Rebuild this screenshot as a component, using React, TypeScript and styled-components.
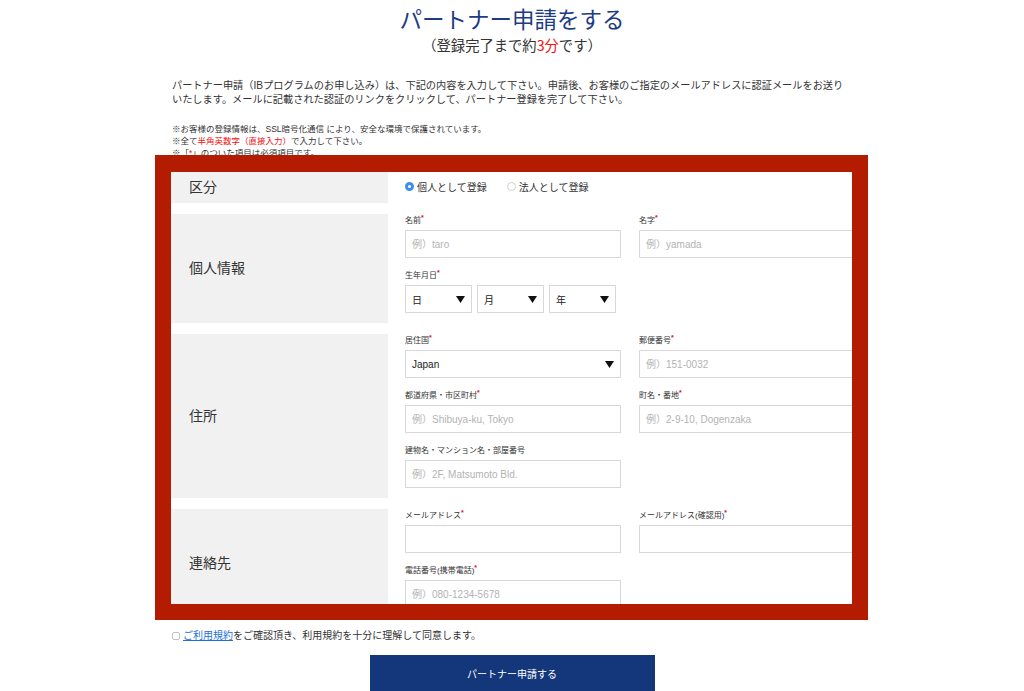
import React from 'react'
import styled, { createGlobalStyle } from 'styled-components'

const GlobalStyle = createGlobalStyle`
  html, body {
    margin: 0;
    padding: 0;
    background: #ffffff;
  }
  body {
    font-family: "Liberation Sans", "Noto Sans CJK JP", sans-serif;
    color: #333333;
  }
  * {
    box-sizing: border-box;
  }
`

type FeltData = {
  label: string
  required?: boolean
  placeholder?: string
  select?: string
  wide?: boolean
}

const personFelter: FeltData[] = [
  { label: '名前', required: true, placeholder: '例）taro' },
  { label: '名字', required: true, placeholder: '例）yamada' },
]

const adresseFelter: FeltData[] = [
  { label: '居住国', required: true, select: 'Japan' },
  { label: '郵便番号', required: true, placeholder: '例）151-0032' },
  { label: '都道府県・市区町村', required: true, placeholder: '例）Shibuya-ku, Tokyo' },
  { label: '町名・番地', required: true, placeholder: '例）2-9-10, Dogenzaka' },
  { label: '建物名・マンション名・部屋番号', placeholder: '例）2F, Matsumoto Bld.' },
]

const kontaktFelter: FeltData[] = [
  { label: 'メールアドレス', required: true, placeholder: '' },
  { label: 'メールアドレス(確認用)', required: true, placeholder: '' },
  { label: '電話番号(携帯電話)', required: true, placeholder: '例）080-1234-5678' },
]

const Pil = () => (
  <svg width="9" height="7" viewBox="0 0 9 7">
    <path d="M0 0 H9 L4.5 7 Z" fill="#111" />
  </svg>
)

const Felt = ({ felt }: { felt: FeltData }) => (
  <FeltWrapper $wide={felt.wide}>
    <FeltLabel>
      {felt.label}
      {felt.required && <Stjerne>*</Stjerne>}
    </FeltLabel>
    {felt.select ? (
      <Velger $width={216}>
        <span>{felt.select}</span>
        <Pil />
      </Velger>
    ) : (
      <Inndata type="text" placeholder={felt.placeholder} readOnly />
    )}
  </FeltWrapper>
)

const FeltListe = ({ felter }: { felter: FeltData[] }) => (
  <FeltGrid>
    {felter.map((felt) => (
      <Felt key={felt.label} felt={felt} />
    ))}
  </FeltGrid>
)

const App = () => {
  return (
    <>
      <GlobalStyle />
      <Side>
        <Tittel>パートナー申請をする</Tittel>
        <Undertittel>
          （登録完了まで約<Rod>3分</Rod>です）
        </Undertittel>

        <Ingress>
          パートナー申請（IBプログラムのお申し込み）は、下記の内容を入力して下さい。申請後、お客様のご指定のメールアドレスに認証メールをお送り
          <br />
          いたします。メールに記載された認証のリンクをクリックして、パートナー登録を完了して下さい。
        </Ingress>

        <Merknader>
          <div>※お客様の登録情報は、SSL暗号化通信 により、安全な環境で保護されています。</div>
          <div>
            ※全て<Rod>半角英数字（直接入力）</Rod>で入力して下さい。
          </div>
          <div>
            ※「<Rod>*</Rod>」のついた項目は必須項目です。
          </div>
        </Merknader>

        <Ramme>
          <Visning>
            <Skjema>
              <Rad>
                <RadLabel>区分</RadLabel>
                <RadioInnhold>
                  <RadioValg>
                    <RadioPrikk $valgt />
                    個人として登録
                  </RadioValg>
                  <RadioValg>
                    <RadioPrikk />
                    法人として登録
                  </RadioValg>
                </RadioInnhold>
              </Rad>

              <Rad>
                <RadLabel>個人情報</RadLabel>
                <RadInnhold>
                  <FeltGrid>
                    {personFelter.map((felt) => (
                      <Felt key={felt.label} felt={felt} />
                    ))}
                    <FeltWrapper $wide>
                      <FeltLabel>
                        生年月日<Stjerne>*</Stjerne>
                      </FeltLabel>
                      <DatoRad>
                        {['日', '月', '年'].map((del) => (
                          <Velger key={del} $width={67}>
                            <span>{del}</span>
                            <Pil />
                          </Velger>
                        ))}
                      </DatoRad>
                    </FeltWrapper>
                  </FeltGrid>
                </RadInnhold>
              </Rad>

              <Rad>
                <RadLabel>住所</RadLabel>
                <RadInnhold>
                  <FeltListe felter={adresseFelter} />
                </RadInnhold>
              </Rad>

              <Rad>
                <RadLabel>連絡先</RadLabel>
                <RadInnhold>
                  <FeltListe felter={kontaktFelter} />
                </RadInnhold>
              </Rad>
            </Skjema>
          </Visning>
        </Ramme>

        <Samtykke>
          <Avkryss />
          <Lenke href="#">ご利用規約</Lenke>をご確認頂き、利用規約を十分に理解して同意します。
        </Samtykke>

        <SendKnapp type="button">パートナー申請する</SendKnapp>
      </Side>
    </>
  )
}

const Side = styled.main`
  width: 680px;
  margin: 0 auto;
  display: flex;
  flex-direction: column;
`

const Tittel = styled.h1`
  margin: 4px 0 0;
  font-size: 22.5px;
  line-height: 28px;
  font-weight: 400;
  color: #1d3c85;
  text-align: center;
  font-family: "Noto Sans CJK JP", sans-serif;
`

const Undertittel = styled.p`
  margin: 4px 0 0;
  font-size: 14.3px;
  line-height: 18px;
  text-align: center;
  color: #333;
  font-family: "Noto Sans CJK JP", sans-serif;
`

const Rod = styled.span`
  color: #f01010;
`

const Ingress = styled.p`
  margin: 25px 0 0;
  font-size: 10.2px;
  line-height: 14px;
  color: #333;
  white-space: nowrap;
`

const Merknader = styled.div`
  margin-top: 16px;
  height: 32px;
  overflow: hidden;
  font-size: 8.5px;
  line-height: 12px;
  color: #333;
`

const Ramme = styled.section`
  margin: 0 -16px 0 -17px;
  border: 16px solid #b31c00;
  border-top-width: 17px;
  background: #ffffff;
`

const Visning = styled.div`
  height: 432px;
  overflow: hidden;
`

const Skjema = styled.div`
  width: 684px;
  display: flex;
  flex-direction: column;
  gap: 11px;
`

const Rad = styled.div`
  display: grid;
  grid-template-columns: 217px 1fr;
`

const RadLabel = styled.div`
  background: #f1f1f1;
  display: flex;
  align-items: center;
  padding: 0 0 3px 18px;
  font-size: 14px;
  color: #333;
  font-family: "Noto Sans CJK JP", sans-serif;
`

const RadInnhold = styled.div`
  padding: 1px 0 10px 17px;
`

const RadioInnhold = styled.div`
  height: 31px;
  display: flex;
  align-items: center;
  gap: 20px;
  padding: 0 0 3px 17px;
`

const RadioValg = styled.label`
  display: flex;
  align-items: center;
  gap: 3px;
  font-size: 10px;
  color: #333;
`

const RadioPrikk = styled.span<{ $valgt?: boolean }>`
  width: 9px;
  height: 9px;
  border-radius: 50%;
  background: #fff;
  border: ${(p) => (p.$valgt ? '3px solid #3b8ef0' : '1px solid #cfcfcf')};
`

const FeltGrid = styled.div`
  display: grid;
  grid-template-columns: 216px 216px;
  column-gap: 18px;
  row-gap: 12px;
`

const FeltWrapper = styled.div<{ $wide?: boolean }>`
  display: flex;
  flex-direction: column;
  gap: 3px;
  grid-column: ${(p) => (p.$wide ? '1 / -1' : 'auto')};
`

const FeltLabel = styled.div`
  height: 12px;
  font-size: 8px;
  line-height: 12px;
  color: #333;
  white-space: nowrap;
`

const Stjerne = styled.sup`
  color: #e0101a;
  font-size: 7px;
  font-weight: 700;
  line-height: 0;
  vertical-align: 3px;
`

const Inndata = styled.input`
  width: 216px;
  height: 28px;
  border: 1px solid #d8d8d8;
  border-radius: 0;
  padding: 0 6px;
  font-family: "Liberation Sans", "Noto Sans CJK JP", sans-serif;
  font-size: 10px;
  color: #333;
  background: #fff;
  outline: none;

  &::placeholder {
    color: #b3b3b3;
  }
`

const Velger = styled.div<{ $width: number }>`
  width: ${(p) => p.$width}px;
  height: 28px;
  border: 1px solid #d8d8d8;
  display: flex;
  align-items: center;
  justify-content: space-between;
  padding: 0 6px 0 6px;
  font-size: 10px;
  color: #222;
  background: #fff;
`

const DatoRad = styled.div`
  display: flex;
  gap: 5px;
`

const Samtykke = styled.div`
  margin-top: 9px;
  display: flex;
  align-items: center;
  font-size: 10px;
  line-height: 14px;
  color: #333;
`

const Avkryss = styled.span`
  width: 8px;
  height: 8px;
  border: 1px solid #c4c4c4;
  border-radius: 2px;
  margin-right: 3px;
`

const Lenke = styled.a`
  color: #1a6fd8;
  text-decoration: underline;
`

const SendKnapp = styled.button`
  margin: 12px auto 0;
  width: 285px;
  height: 36px;
  border: none;
  background: #14377b;
  color: #fff;
  font-family: "Noto Sans CJK JP", sans-serif;
  font-size: 10px;
  cursor: pointer;
`

export default App
